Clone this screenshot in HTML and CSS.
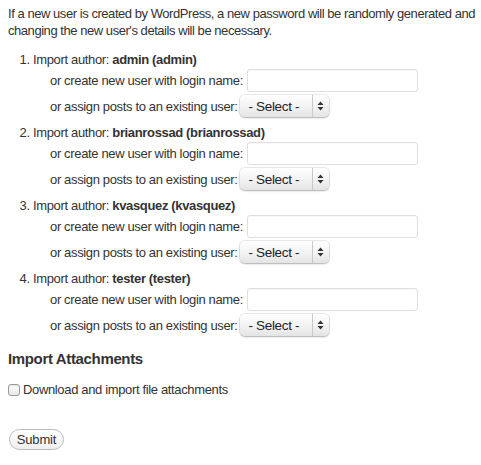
FILE: index.html
```html
<!DOCTYPE html>
<html>
<head>
<meta charset="utf-8">
<link rel="stylesheet" href="styles.css">
</head>
<body>
<form class="import-form">
  <p class="intro">If a new user is created by WordPress, a new password will be randomly generated and changing the new user's details will be necessary.</p>
  <ol class="authors">
    <li class="author">
      <div class="author-line">Import author: <strong>admin (admin)</strong></div>
      <div class="field-row">or create new user with login name: <input class="text-input" type="text"></div>
      <div class="field-row">or assign posts to an existing user: <span class="select"><span class="select-label">- Select -</span><span class="select-arrows"><svg width="7" height="10" viewBox="0 0 7 10"><path d="M3.5 0.5 L6.5 4 H0.5 Z M3.5 9.5 L6.5 6 H0.5 Z" fill="#333"/></svg></span></span></div>
    </li>
    <li class="author">
      <div class="author-line">Import author: <strong>brianrossad (brianrossad)</strong></div>
      <div class="field-row">or create new user with login name: <input class="text-input" type="text"></div>
      <div class="field-row">or assign posts to an existing user: <span class="select"><span class="select-label">- Select -</span><span class="select-arrows"><svg width="7" height="10" viewBox="0 0 7 10"><path d="M3.5 0.5 L6.5 4 H0.5 Z M3.5 9.5 L6.5 6 H0.5 Z" fill="#333"/></svg></span></span></div>
    </li>
    <li class="author">
      <div class="author-line">Import author: <strong>kvasquez (kvasquez)</strong></div>
      <div class="field-row">or create new user with login name: <input class="text-input" type="text"></div>
      <div class="field-row">or assign posts to an existing user: <span class="select"><span class="select-label">- Select -</span><span class="select-arrows"><svg width="7" height="10" viewBox="0 0 7 10"><path d="M3.5 0.5 L6.5 4 H0.5 Z M3.5 9.5 L6.5 6 H0.5 Z" fill="#333"/></svg></span></span></div>
    </li>
    <li class="author">
      <div class="author-line">Import author: <strong>tester (tester)</strong></div>
      <div class="field-row">or create new user with login name: <input class="text-input" type="text"></div>
      <div class="field-row">or assign posts to an existing user: <span class="select"><span class="select-label">- Select -</span><span class="select-arrows"><svg width="7" height="10" viewBox="0 0 7 10"><path d="M3.5 0.5 L6.5 4 H0.5 Z M3.5 9.5 L6.5 6 H0.5 Z" fill="#333"/></svg></span></span></div>
    </li>
  </ol>
  <h3 class="section-title">Import Attachments</h3>
  <label class="check-row"><input class="checkbox" type="checkbox"> Download and import file attachments</label>
  <div class="submit-row"><button class="submit-btn" type="button">Submit</button></div>
</form>
</body>
</html>
```

FILE: styles.css
```css
html, body {
  margin: 0;
  padding: 0;
  background: #fff;
  overflow: hidden;
}
body {
  padding: 5px 0 0 8px;
  font-family: "Liberation Sans", Arial, sans-serif;
  font-size: 13px;
  letter-spacing: -0.35px;
  color: #333;
}
.import-form {
  width: 480px;
}
.intro {
  margin: 0;
  line-height: 17px;
  letter-spacing: -0.45px;
}
.authors {
  margin: 12px 0 0 0;
  padding: 0 0 0 25px;
}
.author {
  height: 73px;
}
.author-line {
  height: 18px;
  line-height: 18px;
}
.author-line strong {
  font-weight: bold;
}
.field-row {
  display: flex;
  align-items: center;
  gap: 4px;
  padding-left: 17px;
  white-space: nowrap;
}
.field-row + .field-row {
  margin-top: 3px;
}
.text-input {
  box-sizing: border-box;
  width: 171px;
  height: 23px;
  margin: 0;
  border: 1px solid #dfdfdf;
  border-radius: 3px;
  background: #fff;
  box-shadow: inset 0 1px 1px rgba(0,0,0,0.03);
}
.select {
  position: relative;
  box-sizing: border-box;
  display: inline-flex;
  align-items: center;
  width: 89px;
  height: 22px;
  margin-left: -2px;
  border-radius: 5px;
  background: linear-gradient(#ffffff, #f1f1f1 60%, #e4e4e4);
  box-shadow: 0 0 0 1px rgba(0,0,0,0.08), 0 1px 2px rgba(0,0,0,0.25);
  color: #222;
  font-size: 13.5px;
}
.select-label {
  padding-left: 9px;
  flex: 1;
}
.select-arrows {
  box-sizing: border-box;
  width: 17px;
  height: 22px;
  border-left: 1px solid #c9c9c9;
  display: flex;
  align-items: center;
  justify-content: center;
}
.section-title {
  margin: 7px 0 0 0;
  font-size: 15px;
  line-height: 18px;
  font-weight: bold;
  color: #333;
}
.check-row {
  display: flex;
  align-items: center;
  gap: 3px;
  margin-top: 13px;
  line-height: 18px;
}
.checkbox {
  appearance: none;
  -webkit-appearance: none;
  box-sizing: border-box;
  width: 12px;
  height: 12px;
  margin: 0;
  border: 1px solid #9a9a9a;
  border-radius: 3px;
  background: linear-gradient(#fff, #e8e8e8);
  box-shadow: inset 0 1px 1px rgba(0,0,0,0.1);
}
.submit-row {
  margin-top: 30px;
  padding-left: 1px;
}
.submit-btn {
  box-sizing: border-box;
  width: 55px;
  height: 21px;
  padding: 0;
  border: 1px solid #bbb;
  border-radius: 11px;
  background: linear-gradient(#ffffff, #efefef);
  font-family: "Liberation Sans", Arial, sans-serif;
  font-size: 13px;
  letter-spacing: -0.2px;
  color: #333;
}
```
